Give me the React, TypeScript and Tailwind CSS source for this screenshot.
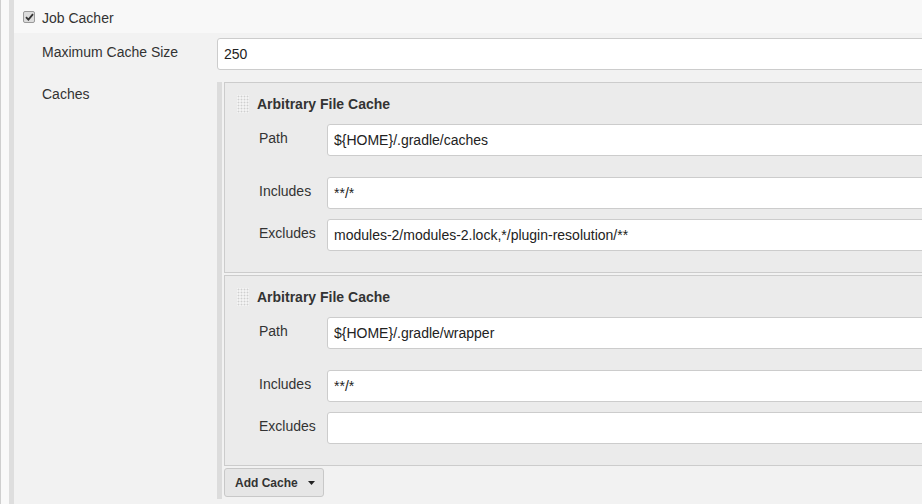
const caches = [
  {
    path: "${HOME}/.gradle/caches",
    includes: "**/*",
    excludes: "modules-2/modules-2.lock,*/plugin-resolution/**",
  },
  {
    path: "${HOME}/.gradle/wrapper",
    includes: "**/*",
    excludes: "",
  },
];

function DragHandle() {
  const dots = [];
  for (let r = 0; r < 6; r++) {
    for (let c = 0; c < 4; c++) {
      dots.push(<rect key={r + "-" + c} x={c * 3 + 0.5} y={r * 3 + 0.5} width="2" height="2" fill="#cfcfcf" />);
    }
  }
  return (
    <svg width="12" height="18" viewBox="0 0 12 18" className="shrink-0 bg-white">
      {dots}
    </svg>
  );
}

function Field({ label, value, className = "" }: { label: string; value: string; className?: string }) {
  return (
    <div className={"flex " + className}>
      <div className="w-[102px] shrink-0 pl-[34px] pt-[6px] leading-[16px]">{label}</div>
      <input
        readOnly
        value={value}
        className="h-[32px] flex-1 rounded-[3px] border border-[#ccc] bg-white px-[6px] text-[14px] text-[#222] outline-none"
      />
    </div>
  );
}

function CacheBox({ path, includes, excludes }: { path: string; includes: string; excludes: string }) {
  return (
    <div className="border border-[#ccc] bg-[#ebebeb] pb-[21px]">
      {/* ==== HEADER ==== */}
      <div className="mt-[11px] flex h-[20px] items-center gap-[8px] pl-[12px]">
        <DragHandle />
        <span className="font-bold text-[#333]">Arbitrary File Cache</span>
      </div>
      <Field label="Path" value={path} className="mt-[10px]" />
      <Field label="Includes" value={includes} className="mt-[21px]" />
      <Field label="Excludes" value={excludes} className="mt-[10px]" />
    </div>
  );
}

export default function App() {
  return (
    <div className="h-[504px] w-[922px] overflow-hidden bg-[#f2f2f2] font-['Liberation_Sans',Arial,sans-serif] text-[14px] text-[#333]">
      <div className="flex h-full w-[980px]">
        {/* ==== LEFT RAILS ==== */}
        <div className="w-px shrink-0 bg-[#cfcfcf]" />
        <div className="w-[8px] shrink-0 bg-[#f9f9f9]" />
        <div className="w-[5px] shrink-0 bg-[#dedede]" />

        <div className="flex-1">
          {/* ==== OPTIONAL BLOCK HEADER ==== */}
          <div className="flex h-[33px] items-center gap-[7px] bg-[#f8f8f8] pl-[9px] pt-[1px]">
            <span className="flex h-[12px] w-[12px] items-center justify-center rounded-[2px] border border-[#9a9a9a] bg-[#dcdcdc]">
              <svg width="9" height="8" viewBox="0 0 9 8">
                <path d="M1 4.2 L3.4 6.6 L8 1.2" fill="none" stroke="#333" strokeWidth="1.8" />
              </svg>
            </span>
            <span className="pt-[2px] leading-[16px]">Job Cacher</span>
          </div>

          {/* ==== SETTINGS ==== */}
          <div className="mt-[5px] grid grid-cols-[203px_1fr]">
            <div className="pl-[28px] pt-[6px] leading-[16px]">Maximum Cache Size</div>
            <input
              readOnly
              value="250"
              className="h-[32px] rounded-[3px] border border-[#ccc] bg-white px-[6px] text-[14px] text-[#222] outline-none"
            />

            <div className="mt-[12px] pl-[28px] pt-[4px] leading-[16px]">Caches</div>
            <div className="mt-[12px] flex border-l-[5px] border-[#dcdcdc] pb-[2px] pl-[2px]">
              <div className="flex flex-1 flex-col">
                <div className="flex flex-col gap-[2px]">
                  {caches.map((c, i) => (
                    <CacheBox key={i} {...c} />
                  ))}
                </div>
                <div className="mt-[2px]">
                  <button className="flex h-[29px] w-[100px] items-center gap-[10px] rounded-[3px] border border-[#c8c8c8] bg-[#e6e6e6] pl-[10px] text-[12px] font-bold text-[#333]">
                    Add Cache
                    <svg width="7" height="4" viewBox="0 0 7 4">
                      <path d="M0 0 H7 L3.5 4 Z" fill="#222" />
                    </svg>
                  </button>
                </div>
              </div>
            </div>
          </div>
        </div>
      </div>
    </div>
  );
}
